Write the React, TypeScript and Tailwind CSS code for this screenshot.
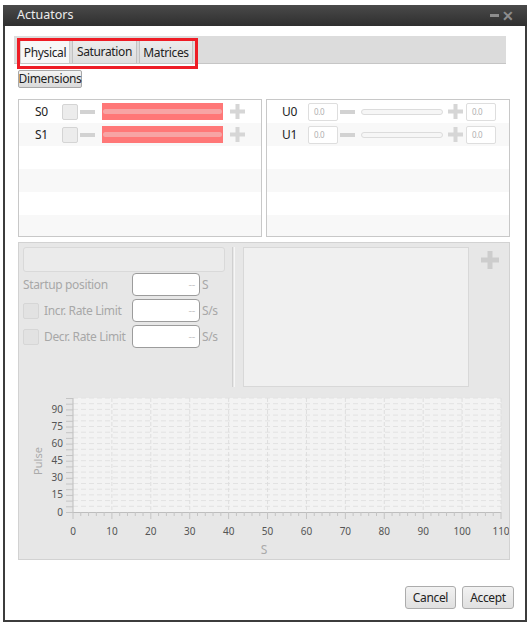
import React from "react";

const FONT = "font-['Segoe_UI','Noto_Sans','Open_Sans',sans-serif] tracking-[-0.35px]";

function Minus({ className = "" }: { className?: string }) {
  return <div className={`h-[4px] w-[15px] bg-[#d2d2d2] ${className}`} />;
}

function Plus({ size = 15, thick = 4, color = "#d6d6d6" }: { size?: number; thick?: number; color?: string }) {
  return (
    <svg width={size} height={size} viewBox={`0 0 ${size} ${size}`} className="shrink-0">
      <rect x={(size - thick) / 2} y={0} width={thick} height={size} fill={color} />
      <rect x={0} y={(size - thick) / 2} width={size} height={thick} fill={color} />
    </svg>
  );
}

function ServoRow({ name, shade }: { name: string; shade: boolean }) {
  return (
    <div className={`flex h-[23px] items-center ${shade ? "bg-[#f8f8f8]" : "bg-white"}`}>
      <span className="w-[43px] pl-[16px] text-[12px] text-[#222]">{name}</span>
      <div className="h-[16px] w-[16px] rounded-[2px] border border-[#d4d4d4] bg-[#ececec]" />
      <Minus className="ml-[2px]" />
      {/* red track = actuator out of range */}
      <div className="ml-[7px] flex h-[17px] w-[121px] items-center bg-[#ff7777] px-[1px]">
        <div className="h-[5px] w-full rounded-full bg-[#f7a4a4]" />
      </div>
      <div className="ml-[7px]">
        <Plus />
      </div>
    </div>
  );
}

function NumBox() {
  return (
    <div className="flex h-[18px] w-[30px] items-center rounded-[2px] border border-[#dedede] bg-white pl-[5px] text-[8px] text-[#b0b0b0]">
      0.0
    </div>
  );
}

function InputRow({ name, shade }: { name: string; shade: boolean }) {
  return (
    <div className={`flex h-[23px] items-center ${shade ? "bg-[#f8f8f8]" : "bg-white"}`}>
      <span className="w-[41px] pl-[15px] text-[12px] text-[#222]">{name}</span>
      <NumBox />
      <Minus className="ml-[2px]" />
      <div className="ml-[6px] h-[6px] w-[82px] rounded-full border border-[#dcdcdc] bg-[#f6f6f6]" />
      <div className="ml-[5px]">
        <Plus />
      </div>
      <div className="ml-[3px]">
        <NumBox />
      </div>
    </div>
  );
}

function EmptyRows({ from }: { from: number }) {
  return (
    <>
      {[0, 1, 2, 3].map((i) => (
        <div key={i} className={`h-[23px] ${(from + i) % 2 === 1 ? "bg-[#f8f8f8]" : "bg-white"}`} />
      ))}
    </>
  );
}

function LimitField({ unit }: { unit: string }) {
  return (
    <div className="flex items-center">
      <div className="flex h-[23px] w-[68px] items-center justify-end rounded-[4px] border border-[#9c9c9c] bg-white pr-[4px] text-[11px] text-[#c8c8c8]">
        --
      </div>
      <span className="ml-[2px] text-[12px] text-[#a8a8a8]">{unit}</span>
    </div>
  );
}

// axis helpers, svg local coords
const X0 = 54;
const X1 = 482;
const YB = 124;
const px = (v: number) => X0 + (v * (X1 - X0)) / 110;
const py = (v: number) => YB - v * 1.14;

function PulseChart() {
  const xs10 = Array.from({ length: 12 }, (_, i) => i * 10);
  const xs2 = Array.from({ length: 56 }, (_, i) => i * 2);
  const ys5 = Array.from({ length: 21 }, (_, i) => i * 5);
  const ys15 = [0, 15, 30, 45, 60, 75, 90];
  return (
    <svg width={490} height={172} className="block tracking-normal">
      <rect x={X0} y={py(100)} width={X1 - X0} height={YB - py(100)} fill="#f3f3f3" />
      {ys5.slice(1).map((v) => (
        <line key={"h" + v} x1={X0} x2={X1} y1={py(v)} y2={py(v)} stroke="#e2e2e2" strokeDasharray="5 3" />
      ))}
      {xs10.slice(1).map((v) => (
        <line key={"v" + v} x1={px(v)} x2={px(v)} y1={py(100)} y2={YB} stroke="#dedede" strokeDasharray="4 2" />
      ))}
      <line x1={X0} x2={X0} y1={py(100)} y2={YB} stroke="#bdbdbd" />
      <line x1={X0} x2={X1} y1={YB + 0.5} y2={YB + 0.5} stroke="#bdbdbd" />
      {ys5.map((v) => (
        <line key={"yt" + v} x1={X0 - 7} x2={X0} y1={py(v) + 0.5} y2={py(v) + 0.5} stroke="#c4c4c4" />
      ))}
      {xs2.map((v) => (
        <line
          key={"xt" + v}
          x1={px(v)}
          x2={px(v)}
          y1={YB}
          y2={YB + (v % 10 === 0 ? 7 : 4)}
          stroke="#c4c4c4"
        />
      ))}
      {ys15.map((v) => (
        <text key={"yl" + v} x={X0 - 10} y={py(v) + 3.5} textAnchor="end" fontSize={10} fill="#555">
          {v}
        </text>
      ))}
      {xs10.map((v) => (
        <text key={"xl" + v} x={px(v)} y={147} textAnchor="middle" fontSize={10} fill="#555">
          {v}
        </text>
      ))}
      <text x={245} y={166} textAnchor="middle" fontSize={12} fill="#aaa">
        S
      </text>
      <text x={23} y={73} textAnchor="middle" fontSize={11} fill="#aaa" transform="rotate(-90 23 73)">
        Pulse
      </text>
    </svg>
  );
}

export default function App() {
  return (
    <div className={`h-[627px] w-[531px] bg-white pl-[3px] pt-[5px] ${FONT}`}>
      <div className="flex h-[617px] w-[524px] flex-col border-x-2 border-b-2 border-[#3c3c3c] bg-white">
        {/* title bar */}
        <div className="-mx-[2px] flex h-[21px] items-center justify-between bg-gradient-to-b from-[#4a4a4a] to-[#2f2f2f] pl-[14px] pr-[13px]">
          <span className="text-[12.5px] tracking-normal text-[#ececec]">Actuators</span>
          <div className="flex items-center gap-[3px]">
            <div className="h-[3px] w-[9px] bg-[#8d8d8d]" />
            <span className="text-[14px] font-bold leading-none text-[#8d8d8d]">✕</span>
          </div>
        </div>

        {/* tabs */}
        <div className="relative ml-[9px] mt-[10px] flex h-[28px] w-[492px] items-end border-b border-[#c6c6c6] bg-[#dcdcdc] pl-[6px]">
          <div className="flex h-[24px] w-[50px] items-center justify-center border border-b-0 border-[#cfcfcf] bg-[#f7f7f7] pt-[2px] text-[12px] text-[#222]">
            Physical
          </div>
          <div className="ml-[2px] flex h-[24px] w-[65px] items-center justify-center border border-b-0 border-[#c2c2c2] bg-gradient-to-b from-[#ececec] to-[#dedede] text-[12px] text-[#222]">
            Saturation
          </div>
          <div className="ml-[2px] flex h-[24px] w-[54px] items-center justify-center border border-b-0 border-[#c2c2c2] bg-gradient-to-b from-[#ececec] to-[#dedede] pt-[2px] text-[12px] text-[#222]">
            Matrices
          </div>
          <div className="absolute left-[3px] top-[2px] h-[31px] w-[181px] border-[3px] border-[#ee1c25]" />
        </div>

        <button className="ml-[13px] mt-[6px] flex h-[18px] w-[64px] items-center justify-center rounded-[2px] border border-[#a8a8a8] bg-gradient-to-b from-[#f4f4f4] to-[#dadada] text-[12px] text-[#222]">
          Dimensions
        </button>

        {/* servo outputs / control inputs */}
        <div className="ml-[13px] mt-[11px] flex gap-[4px]">
          <div className="h-[138px] w-[244px] overflow-hidden border border-[#c8c8c8]">
            <ServoRow name="S0" shade={false} />
            <ServoRow name="S1" shade={true} />
            <EmptyRows from={2} />
          </div>
          <div className="h-[138px] w-[244px] overflow-hidden border border-[#c8c8c8]">
            <InputRow name="U0" shade={false} />
            <InputRow name="U1" shade={true} />
            <EmptyRows from={2} />
          </div>
        </div>

        {/* disabled detail panel */}
        <div className="ml-[13px] mt-[5px] h-[318px] w-[492px] border border-[#d2d2d2] bg-[#e7e7e7]">
          <div className="flex h-[145px] pl-[4px] pt-[4px]">
            <div className="w-[206px]">
              <div className="h-[25px] w-[202px] rounded-[3px] border border-[#d9d9d9] bg-[#ebebeb]" />
              <div className="mt-[1px] flex h-[23px] items-center">
                <span className="w-[109px] text-[12px] text-[#a8a8a8]">Startup position</span>
                <LimitField unit="S" />
              </div>
              <div className="mt-[3px] flex h-[23px] items-center">
                <div className="h-[16px] w-[16px] rounded-[2px] border border-[#d6d6d6] bg-[#e2e2e2]" />
                <span className="ml-[5px] w-[88px] text-[12px] text-[#a8a8a8]">Incr. Rate Limit</span>
                <LimitField unit="S/s" />
              </div>
              <div className="mt-[3px] flex h-[23px] items-center">
                <div className="h-[16px] w-[16px] rounded-[2px] border border-[#d6d6d6] bg-[#e2e2e2]" />
                <span className="ml-[5px] w-[88px] text-[12px] text-[#a8a8a8]">Decr. Rate Limit</span>
                <LimitField unit="S/s" />
              </div>
            </div>
            <div className="ml-[3px] flex h-[140px] gap-[1px]">
              <div className="w-[1px] bg-[#d0d0d0]" />
              <div className="w-[1px] bg-[#f6f6f6]" />
            </div>
            <div className="ml-[8px] h-[140px] w-[226px] border border-[#d8d8d8] bg-[#f0f0f0]" />
            <div className="ml-[12px] mt-[4px]">
              <Plus size={18} thick={5} color="#cdcdcd" />
            </div>
          </div>
          <PulseChart />
        </div>

        {/* dialog buttons */}
        <div className="mr-[11px] mt-[26px] flex justify-end gap-[6px]">
          <button className="h-[23px] w-[51px] rounded-[3px] border border-[#acacac] bg-gradient-to-b from-[#f2f2f2] to-[#e0e0e0] text-[12px] text-[#222]">
            Cancel
          </button>
          <button className="h-[23px] w-[52px] rounded-[3px] border border-[#acacac] bg-gradient-to-b from-[#f2f2f2] to-[#e0e0e0] text-[12px] text-[#222]">
            Accept
          </button>
        </div>
      </div>
    </div>
  );
}
